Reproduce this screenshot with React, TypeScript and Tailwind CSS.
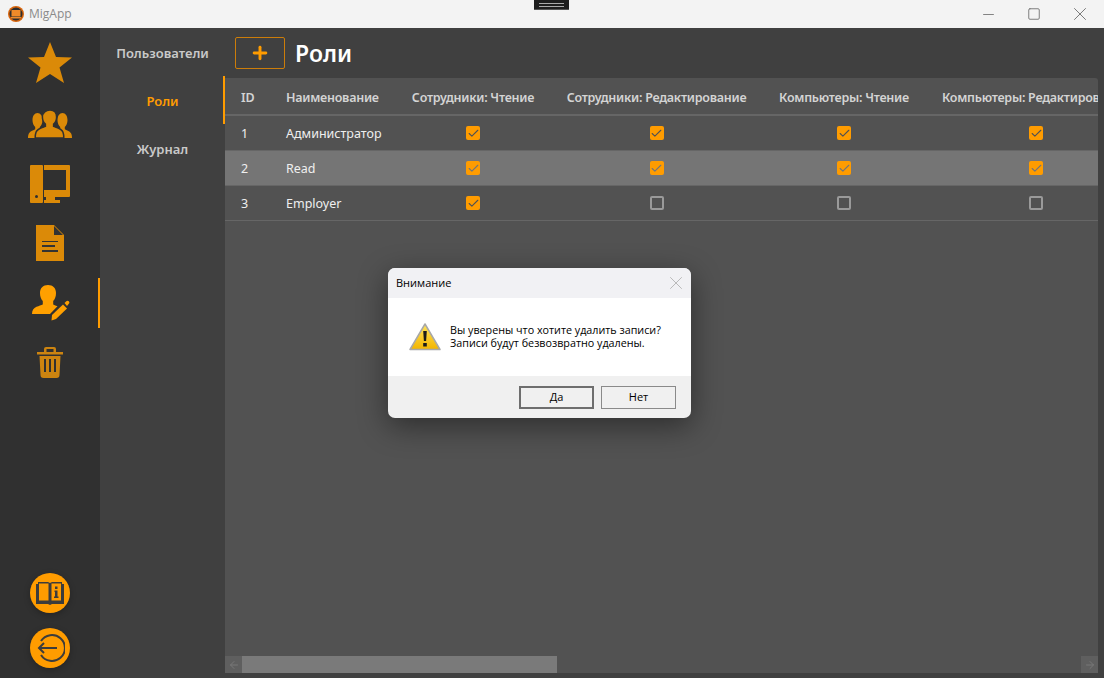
import { Minus, Square, X, Plus, Check, ArrowLeft, ArrowRight } from "lucide-react";

const rows = [
    { id: 1, name: "Администратор", checks: [true, true, true, true] },
    { id: 2, name: "Read", checks: [true, true, true, true] },
    { id: 3, name: "Employer", checks: [true, false, false, false] },
];

const gridCols = "grid grid-cols-[45px_126px_154px_213px_162px_222px] w-[922px]";

function CheckBox({ on, selected }: { on: boolean; selected: boolean }) {
    return on ? (
        <div className={`flex h-[14px] w-[14px] items-center justify-center rounded-[2px] bg-[#ff9c00] ${selected ? "text-[#757575]" : "text-[#525252]"}`}>
            <Check size={13} strokeWidth={2} />
        </div>
    ) : (
        <div className="h-[14px] w-[14px] rounded-[2px] border-2 border-[#9a9a9a]" />
    );
}

function SideIcons() {
    return (
        <div className="flex flex-1 flex-col items-center">
            {/* star */}
            <svg width="44" height="42" viewBox="0 0 44 42" className="mt-[14px]" fill="#db8a08">
                <path d="M22 0 L28 15 L44 15.5 L31.5 25.5 L36 41 L22 32 L8 41 L12.5 25.5 L0 15.5 L16 15 Z" />
            </svg>
            {/* users */}
            <svg width="44" height="28" viewBox="0 0 44 28" className="mt-[26px]" fill="#db8a08">
                <path d="M9.500 3c3 0 5 3 5 7.200 0 2.800-1.200 5.400-2.700 6.800v2.200c1.400 .8 4.900 1.700 6.200 4 .7 1.200 1 2.600 1 4.800H0c0-2.200 .3-3.600 1-4.800 1.300-2.300 4.800-3.200 6.200-4V17c-1.500-1.400-2.700-4-2.700-6.800C4.500 6 6.500 3 9.500 3z" />
                <path d="M34.500 3c3 0 5 3 5 7.200 0 2.800-1.200 5.400-2.700 6.800v2.200c1.400 .8 4.900 1.700 6.200 4 .7 1.200 1 2.600 1 4.800H25c0-2.200 .3-3.600 1-4.800 1.300-2.300 4.800-3.200 6.200-4V17c-1.500-1.400-2.700-4-2.700-6.800C29.500 6 31.500 3 34.500 3z" />
                <path
                    d="M22 0c4.200 0 6.600 3 6.600 7 0 3-1.200 5.600-3 7v2.400c3 1.200 8 2.200 9.400 5.800 .6 1.600 .8 3.800 .8 5.800H7.200c0-2 .2-4.200 .8-5.800 1.400-3.600 6.400-4.600 9.400-5.800V14c-1.800-1.400-3-4-3-7 0-4 3.400-7 7.600-7z"
                    stroke="#303030"
                    strokeWidth="1.500"
                />
            </svg>
            {/* computer */}
            <svg width="40" height="38" viewBox="0 0 40 38" className="mt-[27px]" fill="#db8a08">
                <path fillRule="evenodd" d="M1 0h11a1 1 0 0 1 1 1v36a1 1 0 0 1-1 1H1a1 1 0 0 1-1-1V1a1 1 0 0 1 1-1zM6.500 30a1.500 1.500 0 1 0 0 3 1.500 1.500 0 0 0 0-3z" />
                <path d="M14 0h25a1 1 0 0 1 1 1v30a1 1 0 0 1-1 1H14v-7h22V5H14z" />
                <path d="M16 32h9v3h5v3H14v-3h2z" />
            </svg>
            {/* document */}
            <svg width="28" height="36" viewBox="0 0 28 36" className="mt-[22px]">
                <path d="M0 0h18l10 10v26H0z" fill="#db8a08" />
                <path d="M18 1v9h9z" fill="#333" />
                <path d="M6 16h16v1H6zM6 20h13v2H6zM6 25h16v2H6z" fill="#333" />
            </svg>
            {/* user edit, active */}
            <div className="relative mt-[17px] flex h-[50px] w-full items-center justify-center">
                <svg width="38" height="38" viewBox="0 0 38 38" className="ml-[2px]" fill="#ffa000">
                    <path d="M16 1c5 0 8 3 8 8 0 3.500-1 6-2.800 8v3.500c1.300 .8 2.800 1.300 4.300 1.800L18 30H0c0-3.500 1.500-6 4.500-7.300 2.500-1 4.600-1.500 6.300-2.300V17C9 15 8 12.500 8 9c0-5 3-8 8-8z" />
                    <path d="M20 31l11-10.500 4 4L24 35l-4.500 1.500z" />
                    <path d="M32.500 19l1.800-1.700c.8-.7 1.800-.7 2.500 0 .8 .8 .8 1.800 0 2.500L35 22z" />
                </svg>
                <div className="absolute right-0 top-0 h-[50px] w-[2px] bg-[#ff9c00]" />
            </div>
            {/* trash */}
            <svg width="26" height="31" viewBox="0 0 26 31" className="mt-[19px]" fill="#cc8410">
                <path fillRule="evenodd" d="M9 0h8a2 2 0 0 1 2 2v3h7v2.500H0V5h7V2a2 2 0 0 1 2-2zm.500 2v3h7V2z" />
                <path fillRule="evenodd" d="M2.500 9h21l-1 19a3 3 0 0 1-3 3H6.500a3 3 0 0 1-3-3zM7 12v13h2V12zm5 0v13h2V12zm5 0v13h2V12z" />
            </svg>
            <div className="flex-1" />
            {/* manual */}
            <div className="mb-[15px] flex h-10 w-10 items-center justify-center rounded-full bg-[#ff9c00] shadow-[0_2px_6px_rgba(0,0,0,0.25)]">
                <svg width="30" height="24" viewBox="0 0 30 24">
                    <path d="M1 3h2V1h10l2 1 2-1h10v2h2v20H17l-2 1-2-1H1z" fill="#3c3c3c" />
                    <path d="M4 2.500h9.500v17H4zM16.500 2.500H26v17h-9.500z" fill="#ff9c00" />
                    <path d="M20 5.500h2.500V8H20zM19.500 9.500h3v6h1v1.500h-4.500v-1.500h1v-4.500h-.5z" fill="#3c3c3c" />
                </svg>
            </div>
            {/* exit */}
            <div className="mb-[10px] flex h-10 w-10 items-center justify-center rounded-full bg-[#ff9c00] shadow-[0_2px_6px_rgba(0,0,0,0.25)]">
                <svg width="30" height="30" viewBox="0 0 30 30" fill="none" stroke="#3c3c3c" strokeWidth="2">
                    <path d="M6 8a13 13 0 1 1 0 14" />
                    <path d="M22 15H4M9 10l-5 5 5 5" />
                </svg>
            </div>
        </div>
    );
}

export default function App() {
    return (
        <div className="relative flex h-[678px] w-[1104px] flex-col overflow-hidden bg-[#404040] font-['Noto_Sans',sans-serif]">
            {/* Title bar */}
            <div className="flex h-[28px] shrink-0 items-center bg-[#f3f3f3] pl-2">
                <svg width="16" height="16" viewBox="0 0 16 16">
                    <circle cx="8" cy="8" r="8" fill="#d9650c" />
                    <circle cx="8" cy="8" r="6.500" fill="#2e2e2e" />
                    <rect x="3.500" y="4" width="9" height="6.500" fill="#ee8a2a" />
                    <rect x="3" y="11" width="10" height="1.500" fill="#ee8a2a" />
                </svg>
                <span className="ml-[5px] font-['Open_Sans',sans-serif] text-[12px] text-[#8a8a8a]">MigApp</span>
                <div className="ml-auto flex items-center text-[#6f6f6f]">
                    <div className="flex w-[46px] justify-center"><Minus size={17} strokeWidth={1.200} /></div>
                    <div className="flex w-[46px] justify-center"><Square size={14} strokeWidth={1.500} /></div>
                    <div className="flex w-[46px] justify-center"><X size={22} strokeWidth={1} /></div>
                    <div className="w-[1px]" />
                </div>
            </div>

            <div className="flex min-h-0 flex-1">
                {/* Icon rail */}
                <div className="flex w-[100px] shrink-0 bg-[#303030]">
                    <SideIcons />
                </div>

                {/* Section menu */}
                <div className="relative flex w-[125px] shrink-0 flex-col items-center pt-[2px] text-[13px] font-semibold text-[#c9c9c9]">
                    <div className="flex h-[48px] items-center">Пользователи</div>
                    <div className="flex h-[48px] items-center text-[#ff9c00]">Роли</div>
                    <div className="flex h-[48px] items-center">Журнал</div>
                    <div className="absolute right-0 top-[48px] h-[48px] w-[2px] bg-[#ff9c00]" />
                </div>

                {/* Content */}
                <div className="flex min-w-0 flex-1 flex-col pr-[6px] pb-[5px]">
                    <div className="flex h-[50px] shrink-0 items-start pt-[9px]">
                        <div className="ml-[10px] flex h-[32px] w-[50px] items-center justify-center rounded-[2px] border border-[#cc7d0a] text-[#ff9c00]">
                            <Plus size={20} strokeWidth={3.500} />
                        </div>
                        <h1 className="ml-[10px] text-[23px] leading-[33px] font-semibold text-white">Роли</h1>
                    </div>
                    <div className="flex min-h-0 flex-1 flex-col overflow-hidden rounded-tr-[3px] bg-[#525252] text-[12.500px] text-[#efefef]">
                        <div className={`${gridCols} h-[38px] shrink-0 items-center border-b-2 border-[#666] pt-[4px] font-semibold tracking-[-0.25px] text-[#d4d4d4]`}>
                            <div className="pl-4">ID</div>
                            <div className="pl-4">Наименование</div>
                            <div className="text-center">Сотрудники: Чтение</div>
                            <div className="text-center">Сотрудники: Редактирование</div>
                            <div className="text-center">Компьютеры: Чтение</div>
                            <div className="whitespace-nowrap pl-[17px]">Компьютеры: Редактирование</div>
                        </div>
                        {rows.map((row) => (
                            <div
                                key={row.id}
                                className={`${gridCols} h-[35px] shrink-0 items-center border-b border-[#666] ${row.id === 2 ? "bg-[#757575]" : ""}`}
                            >
                                <div className="pl-4 pt-[2px]">{row.id}</div>
                                <div className="pl-4 pt-[2px]">{row.name}</div>
                                {row.checks.map((on, i) => (
                                    <div key={i} className="flex justify-center">
                                        <CheckBox on={on} selected={row.id === 2} />
                                    </div>
                                ))}
                            </div>
                        ))}
                        <div className="flex-1" />
                        {/* Horizontal scrollbar */}
                        <div className="flex h-[17px] shrink-0 items-stretch">
                            <div className="flex w-[17px] items-center justify-center bg-[#5f5f5f] text-[#787878]">
                                <ArrowLeft size={12} strokeWidth={2} />
                            </div>
                            <div className="w-[315px] bg-[#7a7a7a]" />
                            <div className="flex-1" />
                            <div className="flex w-[17px] items-center justify-center bg-[#5f5f5f] text-[#787878]">
                                <ArrowRight size={12} strokeWidth={2} />
                            </div>
                        </div>
                    </div>
                </div>
            </div>

            {/* Dark tab at the top edge */}
            <div className="absolute left-[534px] top-0 flex h-[10px] w-[35px] flex-col items-center justify-center gap-[2px] border-b border-[#555] bg-[#1e1e1e]">
                <div className="h-[1px] w-[25px] bg-[#aaa]" />
                <div className="h-[1px] w-[25px] bg-[#aaa]" />
            </div>

            {/* Confirm dialog */}
            <div className="absolute left-[388px] top-[268px] flex h-[150px] w-[303px] flex-col overflow-hidden rounded-[7px] bg-[#f0f0f0] font-['Open_Sans',sans-serif] text-black shadow-[0_8px_30px_rgba(0,0,0,0.45)]">
                <div className="flex h-[30px] shrink-0 items-center justify-between bg-[#f1f1f4] pl-2 pr-[4px] text-[11px]">
                    <span>Внимание</span>
                    <X size={22} strokeWidth={1} className="text-[#b5b5b5]" />
                </div>
                <div className="flex h-[78px] shrink-0 items-center bg-white pl-[21px]">
                    <svg width="32" height="28" viewBox="0 0 32 28" className="shrink-0">
                        <defs>
                            <linearGradient id="warn" x1="0" y1="0" x2="0" y2="1">
                                <stop offset="0" stopColor="#ffe45c" />
                                <stop offset="1" stopColor="#f2b400" />
                            </linearGradient>
                        </defs>
                        <path d="M16 1 L31 26.500 H1 Z" fill="url(#warn)" stroke="#a8a8a8" strokeWidth="1.500" strokeLinejoin="round" />
                        <path d="M14.200 8h3.600l-.7 10h-2.200zM14.200 20h3.600v3.500h-3.600z" fill="#1a1a1a" />
                    </svg>
                    <div className="ml-[9px] text-[10.750px] leading-[13px] whitespace-nowrap">
                        <div>Вы уверены что хотите удалить записи?</div>
                        <div>Записи будут безвозвратно удалены.</div>
                    </div>
                </div>
                <div className="flex flex-1 items-start justify-end gap-[7px] pr-[15px] pt-[10px] text-[11px]">
                    <div className="flex h-[23px] w-[75px] items-center justify-center border-2 border-[#6e6e6e] bg-[#f0f0f0]">Да</div>
                    <div className="flex h-[23px] w-[75px] items-center justify-center border border-[#8a8a8a] bg-[#f0f0f0]">Нет</div>
                </div>
            </div>
        </div>
    );
}
